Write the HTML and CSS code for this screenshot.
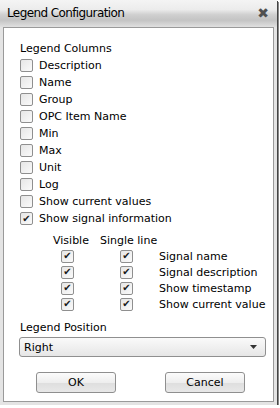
FILE: index.html
```html
<!DOCTYPE html>
<html lang="en">
<head>
  <meta charset="UTF-8">
  <title>Legend Configuration</title>
  <link rel="stylesheet" href="styles.css">
</head>
<body>
  <div class="window">
    <div class="titlebar">
      <span class="title">Legend Configuration</span>
      <span class="close">&#x2716;</span>
    </div>
    <div class="content">
      <div class="section-label">Legend Columns</div>
      <div class="checks">
        <label class="check"><span class="box"></span>Description</label>
        <label class="check"><span class="box"></span>Name</label>
        <label class="check"><span class="box"></span>Group</label>
        <label class="check"><span class="box"></span>OPC Item Name</label>
        <label class="check"><span class="box"></span>Min</label>
        <label class="check"><span class="box"></span>Max</label>
        <label class="check"><span class="box"></span>Unit</label>
        <label class="check"><span class="box"></span>Log</label>
        <label class="check"><span class="box"></span>Show current values</label>
        <label class="check"><span class="box checked">&#x2714;</span>Show signal information</label>
      </div>

      <div class="signal-grid">
        <div class="head">Visible</div>
        <div class="head">Single line</div>
        <div></div>

        <div class="cell"><span class="box checked">&#x2714;</span></div>
        <div class="cell single"><span class="box checked">&#x2714;</span></div>
        <div class="name">Signal name</div>

        <div class="cell"><span class="box checked">&#x2714;</span></div>
        <div class="cell single"><span class="box checked">&#x2714;</span></div>
        <div class="name">Signal description</div>

        <div class="cell"><span class="box checked">&#x2714;</span></div>
        <div class="cell single"><span class="box checked">&#x2714;</span></div>
        <div class="name">Show timestamp</div>

        <div class="cell"><span class="box checked">&#x2714;</span></div>
        <div class="cell single"><span class="box checked">&#x2714;</span></div>
        <div class="name">Show current value</div>
      </div>

      <div class="section-label pos-label">Legend Position</div>
      <div class="dropdown">
        <span>Right</span>
        <svg width="7" height="4" viewBox="0 0 7 4"><path d="M0 0h7L3.5 4z" fill="#333"/></svg>
      </div>

      <div class="buttons">
        <button>OK</button>
        <button>Cancel</button>
      </div>
    </div>
  </div>
</body>
</html>
```

FILE: styles.css
```css
:root {
  --frame: #e4e4e4;
  --line: #9a9a9a;
  --text: #000000;
  --font: Tahoma, "DejaVu Sans", sans-serif;
}

html, body {
  margin: 0;
  padding: 0;
  background: #ffffff;
}

body {
  font-family: var(--font);
  font-size: 11px;
  color: var(--text);
}

.window {
  width: 277px;
  height: 405px;
  background: var(--frame);
  box-shadow: 1px 1px 0 #444, 2px 2px 0 #888;
  display: flex;
  flex-direction: column;
}

.titlebar {
  height: 27px;
  display: flex;
  align-items: center;
  justify-content: space-between;
  padding: 0 8px 0 7px;
  background: linear-gradient(#f4f4f4 0%, #ececec 35%, #cfcfcf 55%, #c4c4c4 75%, #e0e0e0 100%);
  box-sizing: border-box;
}

.title {
  font-size: 12px;
  letter-spacing: -0.6px;
  margin-top: -2px;
}

.close {
  font-size: 14px;
  color: #505050;
  margin-top: -2px;
}

.content {
  margin: 0 3px 3px 3px;
  flex: 1;
  background: #fff;
  border: 1px solid var(--line);
  padding: 14px 10px 0 16px;
  display: flex;
  flex-direction: column;
}

.section-label {
  height: 14px;
  line-height: 14px;
  margin-bottom: 3px;
}

.checks {
  display: flex;
  flex-direction: column;
  gap: 4px;
}

.check {
  display: flex;
  align-items: center;
  gap: 6px;
  height: 13px;
  line-height: 13px;
  white-space: nowrap;
}

.box {
  width: 11px;
  height: 11px;
  border: 1px solid #8f8f8f;
  border-radius: 2px;
  background: linear-gradient(135deg, #e6e6e6, #fafafa);
  display: inline-flex;
  align-items: center;
  justify-content: center;
  flex: none;
  font-size: 10px;
  color: #1a1a1a;
  line-height: 1;
}

.signal-grid {
  display: grid;
  grid-template-columns: 47px 59px auto;
  grid-auto-rows: 16px;
  margin: 7px 0 0 33px;
  align-items: center;
}

.head {
  white-space: nowrap;
}

.cell {
  display: flex;
  padding-left: 8px;
}

.cell.single {
  padding-left: 20px;
}

.name {
  white-space: nowrap;
}

.pos-label {
  margin-top: 9px;
  margin-bottom: 2px;
}

.dropdown {
  height: 18px;
  width: 233px;
  border: 1px solid #8f8f8f;
  border-radius: 3px;
  background: linear-gradient(#fafafa, #e6e6e6);
  display: flex;
  align-items: center;
  justify-content: space-between;
  padding: 0 8px 0 4px;
  margin-left: -1px;
}

.buttons {
  display: flex;
  gap: 49px;
  padding-left: 16px;
  margin-top: 15px;
}

button {
  width: 80px;
  height: 21px;
  font-family: var(--font);
  font-size: 11px;
  color: var(--text);
  border: 1px solid #8f8f8f;
  border-radius: 3px;
  background: linear-gradient(#fcfcfc 0%, #eeeeee 50%, #dedede 51%, #e8e8e8 100%);
  padding: 0;
}
```
